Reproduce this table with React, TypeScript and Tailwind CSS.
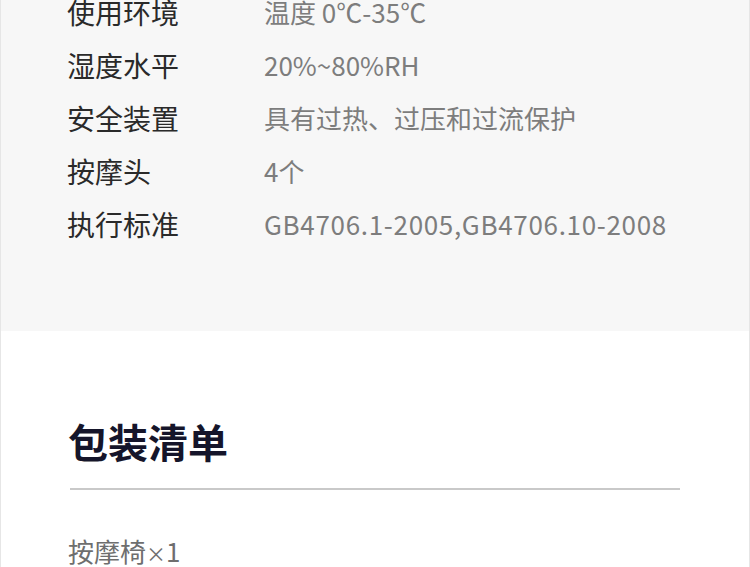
const specs = [
  { label: '使用环境', value: '温度 0℃-35℃' },
  { label: '湿度水平', value: '20%~80%RH' },
  { label: '安全装置', value: '具有过热、过压和过流保护' },
  { label: '按摩头', value: '4个' },
  { label: '执行标准', value: 'GB4706.1-2005,GB4706.10-2008', wide: true },
];

export default function App() {
  return (
    <div
      className="w-[750px] h-[567px] overflow-hidden bg-white border-x border-[#e6e6e6]"
      style={{ fontFamily: '"Noto Sans CJK SC", "Noto Sans", sans-serif' }}
    >
      {/* spec table */}
      <div className="h-[331px] bg-[#f7f7f7] overflow-hidden">
        <div className="-mt-[15px] pl-[66px]">
          {specs.map((s) => (
            <div key={s.label} className="flex items-center h-[53px]">
              <div className="w-[197px] text-[28px] text-[#2a2a2a]">{s.label}</div>
              <div className={s.wide ? 'text-[26px] text-[#7d7d7d] tracking-[0.68px]' : 'text-[26px] text-[#7d7d7d]'}>
                {s.value}
              </div>
            </div>
          ))}
        </div>
      </div>

      {/* packing list */}
      <div className="pl-[67px] pr-[69px]">
        <h2 className="pt-[84px] text-[40px] leading-[52px] font-bold text-[#15152a]">包装清单</h2>
        <div className="mt-[21px] h-[2px] bg-[#c9c9c9] ml-[2px]" />
        <p className="mt-[43px] text-[26px] leading-[36px] text-[#6e6e6e]">
          按摩椅<span className="text-[20px]">×</span>1
        </p>
      </div>
    </div>
  );
}
